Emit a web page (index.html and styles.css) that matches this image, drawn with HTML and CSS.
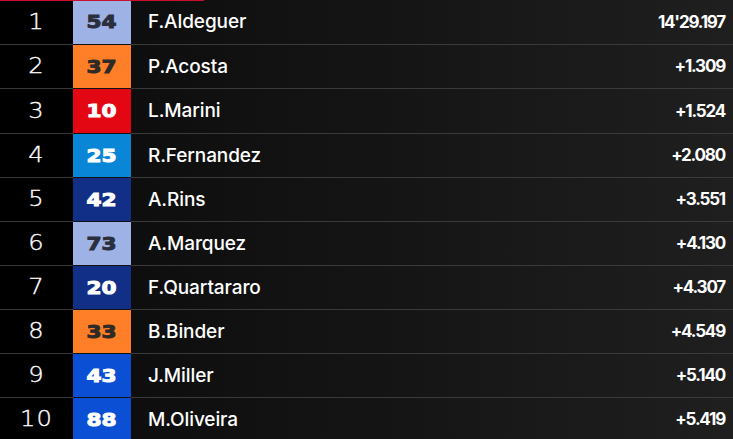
FILE: index.html
```html
<!DOCTYPE html>
<html>
<head>
<meta charset="utf-8">
<link rel="stylesheet" href="styles.css">
</head>
<body>
<div class="board">
  <div class="accent"></div>
  <div class="row"><div class="pos">1</div><div class="num lb"><span>54</span></div><div class="name">F.Aldeguer</div><div class="time">14'29.197</div></div>
  <div class="row"><div class="pos">2</div><div class="num or"><span>37</span></div><div class="name">P.Acosta</div><div class="time">+1.309</div></div>
  <div class="row"><div class="pos">3</div><div class="num rd"><span>10</span></div><div class="name">L.Marini</div><div class="time">+1.524</div></div>
  <div class="row"><div class="pos">4</div><div class="num cy"><span>25</span></div><div class="name">R.Fernandez</div><div class="time">+2.080</div></div>
  <div class="row"><div class="pos">5</div><div class="num db"><span>42</span></div><div class="name">A.Rins</div><div class="time">+3.551</div></div>
  <div class="row"><div class="pos">6</div><div class="num lb"><span>73</span></div><div class="name">A.Marquez</div><div class="time">+4.130</div></div>
  <div class="row"><div class="pos">7</div><div class="num db"><span>20</span></div><div class="name">F.Quartararo</div><div class="time">+4.307</div></div>
  <div class="row"><div class="pos">8</div><div class="num or"><span>33</span></div><div class="name">B.Binder</div><div class="time">+4.549</div></div>
  <div class="row"><div class="pos">9</div><div class="num bl"><span>43</span></div><div class="name">J.Miller</div><div class="time">+5.140</div></div>
  <div class="row"><div class="pos">10</div><div class="num bl"><span>88</span></div><div class="name">M.Oliveira</div><div class="time">+5.419</div></div>
</div>
</body>
</html>
```
FILE: styles.css
```css
html, body {
  margin: 0;
  padding: 0;
  background: #000;
}
.board {
  position: relative;
  width: 733px;
  height: 439px;
  overflow: hidden;
  background: linear-gradient(to right, #000 0, #000 73px, #0e0e0e 131px, #151515 400px, #1f1f1f 733px);
}
.accent {
  position: absolute;
  left: 0;
  top: 0;
  width: 204px;
  height: 1px;
  background: #c8102e;
}
.row {
  display: flex;
  align-items: stretch;
  height: 43px;
  border-bottom: 1px solid #3a3a3a;
}
.row:nth-child(4), .row:nth-child(2) {
  height: 44px;
}
.pos {
  width: 73px;
  display: flex;
  align-items: center;
  justify-content: center;
  padding-bottom: 1px;
  color: #fff;
  font-family: "DejaVu Sans", sans-serif;
  font-weight: 200;
  font-size: 21px;
  letter-spacing: 1px;
  transform: scaleX(1.15);
  -webkit-text-stroke: 0.3px #fff;
}
.num {
  width: 58px;
  display: flex;
  align-items: center;
  justify-content: center;
  padding-bottom: 1px;
  font-family: "DejaVu Sans", sans-serif;
  font-weight: 700;
  font-size: 18px;
  margin-bottom: -1px;
  border-bottom: 1px solid #111;
}
.num span {
  display: inline-block;
  transform: scaleX(1.2);
}
.lb { background: #9fb2e6; color: #2b2f3c; -webkit-text-stroke: 1px #2b2f3c; }
.or { background: #ff7f28; color: #2e2a26; -webkit-text-stroke: 1px #2e2a26; }
.rd { background: #e30613; color: #fff; -webkit-text-stroke: 1px #fff; }
.cy { background: #0a86d6; color: #fff; -webkit-text-stroke: 1px #fff; }
.db { background: #112f86; color: #fff; -webkit-text-stroke: 1px #fff; }
.bl { background: #0b4fd4; color: #fff; -webkit-text-stroke: 1px #fff; }
.name {
  flex: 1;
  display: flex;
  align-items: center;
  padding-left: 17px;
  padding-bottom: 1px;
  color: #fff;
  font-family: "Inter", sans-serif;
  font-weight: 500;
  font-size: 19px;
  letter-spacing: -0.1px;
}
.time {
  display: flex;
  align-items: center;
  padding-right: 8px;
  padding-bottom: 1px;
  color: #fff;
  font-family: "Inter", sans-serif;
  font-weight: 700;
  font-size: 17px;
  letter-spacing: -1.2px;
}
```
